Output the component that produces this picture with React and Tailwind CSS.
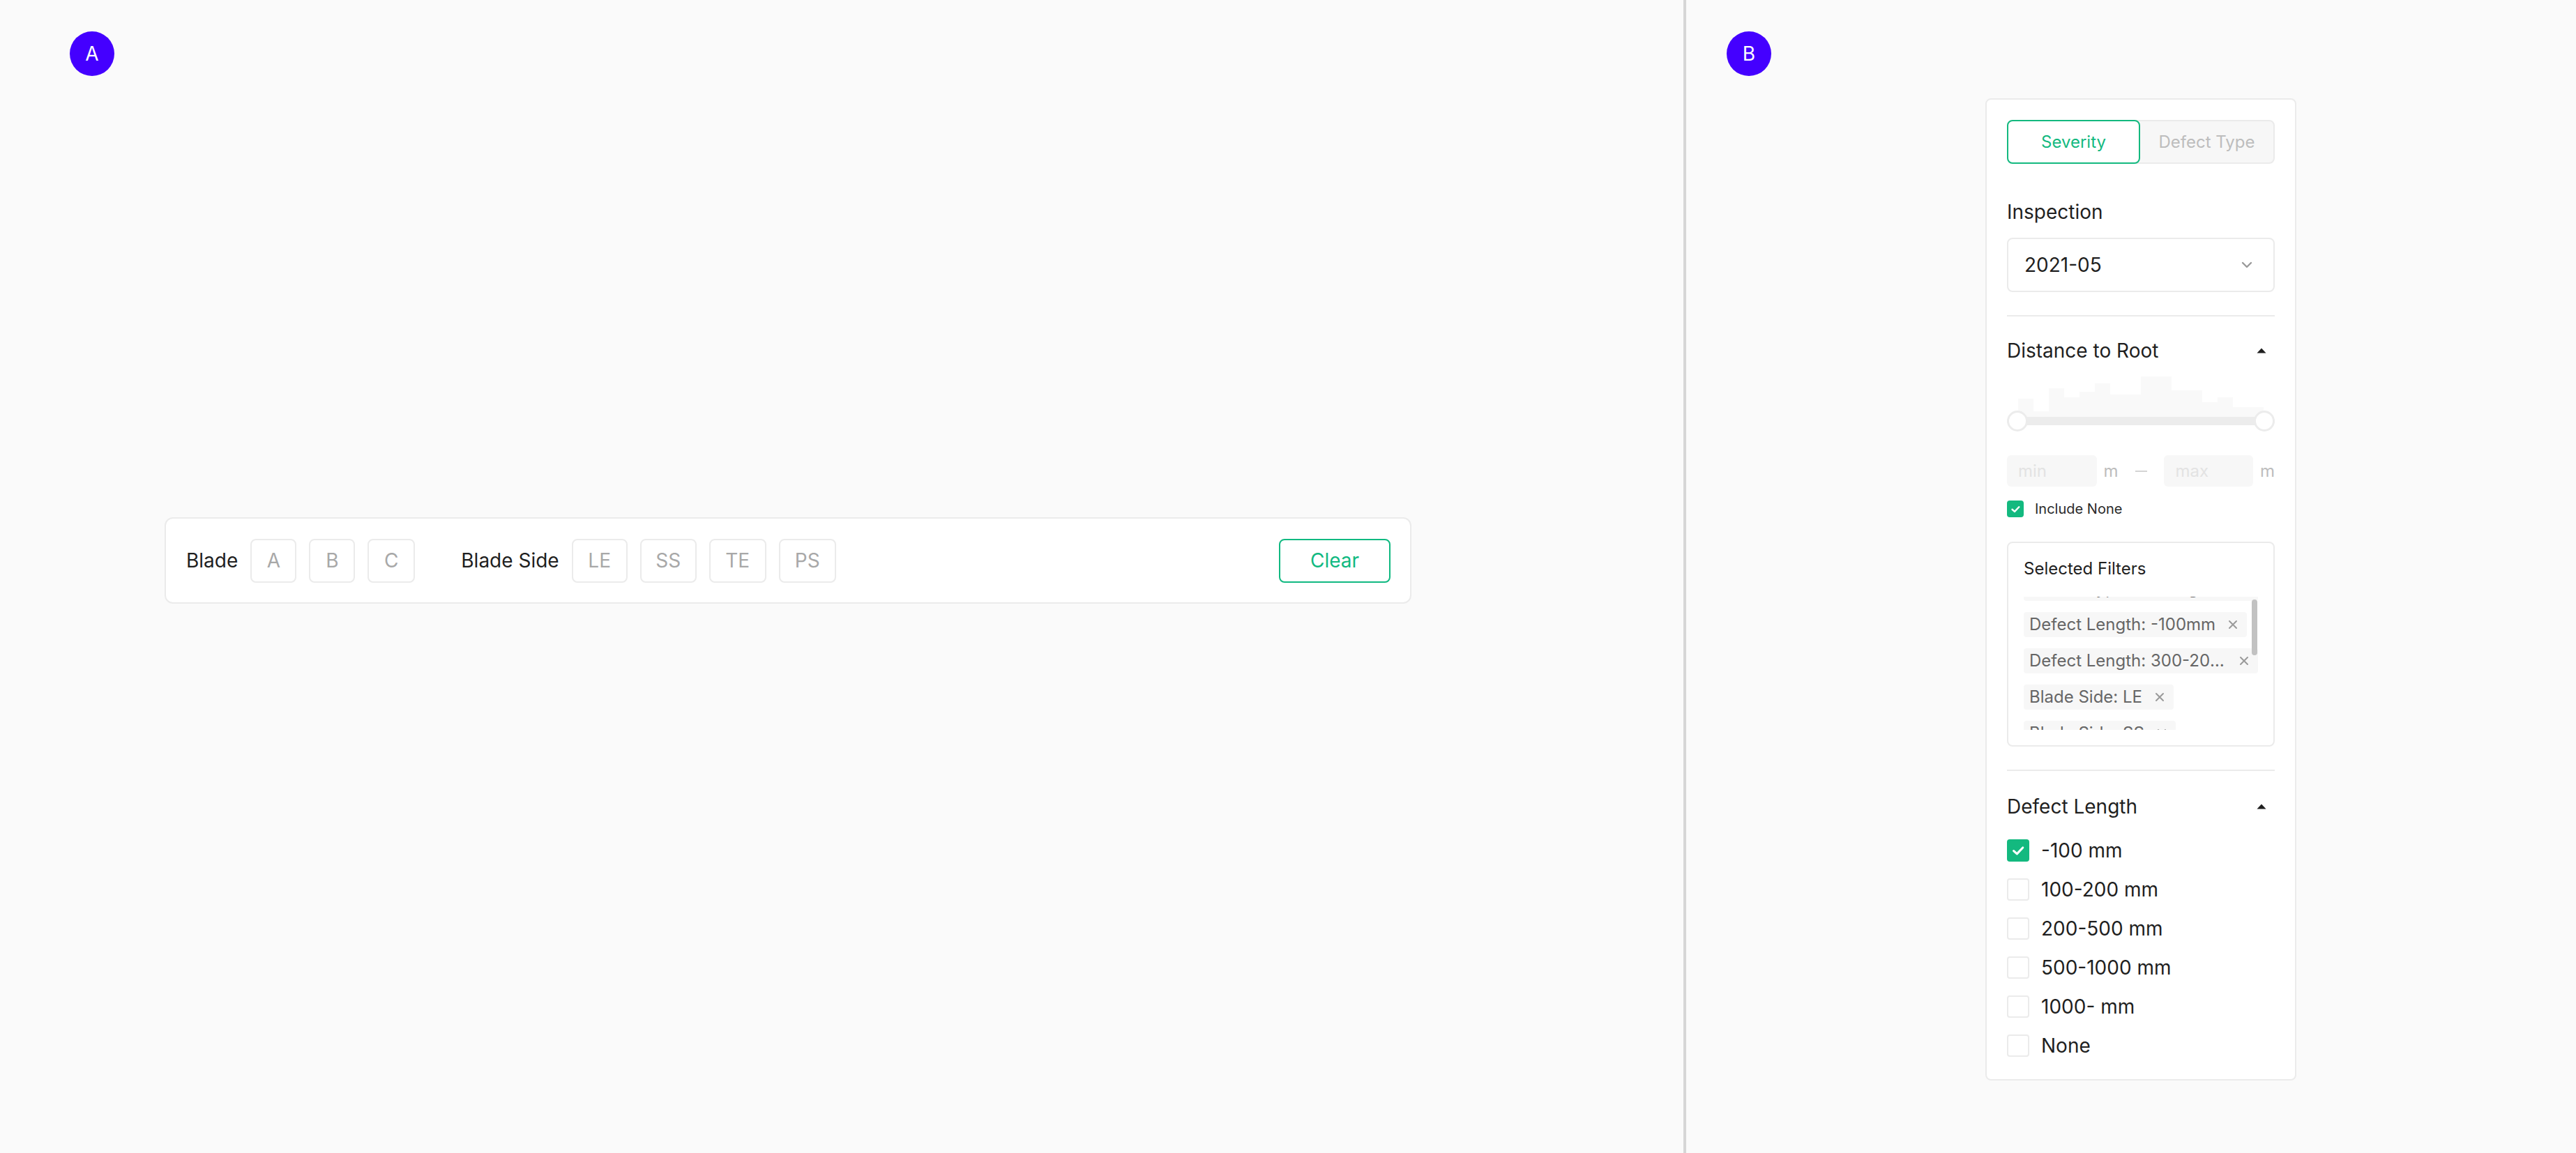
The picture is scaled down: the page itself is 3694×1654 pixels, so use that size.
import React from "react";

const FONT = { fontFamily: "Inter, 'Noto Sans', sans-serif" };

function Badge({ letter }) {
  return (
    <div className="w-[64px] h-[64px] rounded-full bg-[#4400ff] text-white text-[28px] flex items-center justify-center shrink-0">
      {letter}
    </div>
  );
}

function Chip({ label, w }) {
  return (
    <div
      className={`${w} h-[63px] border-2 border-[#ebebeb] rounded-[8px] flex items-center justify-center text-[28px] text-[#a8a8a8]`}
    >
      {label}
    </div>
  );
}

function Caret() {
  return (
    <svg width="14" height="8" viewBox="0 0 14 8" className="mr-[12px]">
      <path d="M7 0.5 L13.5 7.5 L0.5 7.5 Z" fill="#1f1f1f" />
    </svg>
  );
}

function XIcon() {
  return (
    <svg width="14" height="14" viewBox="0 0 14 14" className="ml-[18px] shrink-0">
      <path d="M2 2 L12 12 M12 2 L2 12" stroke="#9a9a9a" strokeWidth="2" strokeLinecap="round" />
    </svg>
  );
}

function Tag({ text }) {
  return (
    <div className="flex items-center h-[36px] w-fit max-w-full bg-[#f7f7f7] rounded-[4px] pl-[8px] pr-[13px] text-[24px] text-[#666666] shrink-0">
      <span className="truncate">{text}</span>
      <XIcon />
    </div>
  );
}

function Check({ checked, size }) {
  if (checked) {
    return (
      <div className={`${size} rounded-[4px] bg-[#13b97f] flex items-center justify-center shrink-0`}>
        <svg viewBox="0 0 24 24" className="w-[70%] h-[70%]">
          <path d="M5 12.5 L10 17 L19 7.5" fill="none" stroke="white" strokeWidth="3.4" strokeLinecap="round" strokeLinejoin="round" />
        </svg>
      </div>
    );
  }
  return <div className={`${size} rounded-[4px] border-2 border-[#ebebeb] bg-white shrink-0`} />;
}

const bars = [26, 8, 41, 28, 36, 48, 32, 32, 58, 58, 38, 38, 21, 28, 14, 14];

export default function App() {
  return (
    <div className="w-[3694px] h-[1654px] flex bg-[#fafafa] text-[#1f1f1f]" style={FONT}>
      {/* Panel A */}
      <div className="w-[2414px] h-full shrink-0 flex flex-col pl-[100px] pt-[45px]">
        <Badge letter="A" />
        <div className="ml-[136px] mt-[633px] w-[1788px] h-[124px] bg-white border-2 border-[#ebebeb] rounded-[12px] flex items-center pl-[29px] pr-[28px]">
          <span className="text-[28px] text-[#1f1f1f] mr-[18px]">Blade</span>
          <div className="flex gap-[18px]">
            <Chip label="A" w="w-[66px]" />
            <Chip label="B" w="w-[66px]" />
            <Chip label="C" w="w-[68px]" />
          </div>
          <span className="text-[28px] text-[#1f1f1f] ml-[66px] mr-[18px]">Blade Side</span>
          <div className="flex gap-[18px]">
            <Chip label="LE" w="w-[80px]" />
            <Chip label="SS" w="w-[81px]" />
            <Chip label="TE" w="w-[82px]" />
            <Chip label="PS" w="w-[82px]" />
          </div>
          <div className="ml-auto w-[160px] h-[63px] border-2 border-[#10b981] rounded-[8px] flex items-center justify-center text-[28px] text-[#10b981]">
            Clear
          </div>
        </div>
      </div>

      {/* Divider */}
      <div className="w-[4px] h-full bg-[#d6d6d6] shrink-0" />

      {/* Panel B */}
      <div className="flex-1 h-full flex items-start">
        <div className="ml-[58px] mt-[45px]">
          <Badge letter="B" />
        </div>
        <div className="ml-[307px] mt-[141px] w-[446px] bg-white border-2 border-[#ebebeb] rounded-[8px] px-[29px] pt-[29px] pb-[32px] flex flex-col">
          {/* Tabs */}
          <div className="h-[63px] flex bg-[#f7f7f7] border-2 border-[#ebebeb] rounded-[8px] relative">
            <div className="absolute -left-[2px] -top-[2px] w-[191px] h-[63px] bg-white border-2 border-[#13b97f] rounded-[8px] flex items-center justify-center text-[24px] text-[#13b97f]">
              Severity
            </div>
            <div className="ml-[189px] flex-1 flex items-center justify-center text-[24px] text-[#bdbdbd]">
              Defect Type
            </div>
          </div>

          {/* Inspection */}
          <div className="mt-[49px] h-[40px] leading-[40px] text-[28px]">Inspection</div>
          <div className="mt-[17px] h-[78px] border-2 border-[#ebebeb] rounded-[8px] flex items-center pl-[23px] pr-[30px]">
            <span className="text-[28px] text-[#1f1f1f]">2021-05</span>
            <svg width="16" height="10" viewBox="0 0 16 10" className="ml-auto">
              <path d="M2 2 L8 8 L14 2" fill="none" stroke="#9a9a9a" strokeWidth="2.4" strokeLinecap="round" strokeLinejoin="round" />
            </svg>
          </div>

          <div className="mt-[33px] h-[2px] bg-[#ebebeb]" />

          {/* Distance to Root */}
          <div className="mt-[29px] h-[40px] flex items-center justify-between">
            <span className="text-[28px] leading-[40px]">Distance to Root</span>
            <Caret />
          </div>
          <div className="mt-[17px] flex flex-col">
            <div className="h-[58px] flex items-end px-[16px]">
              {bars.map((h, i) => (
                <div key={i} className="flex-1 bg-[#f9f9f9]" style={{ height: `${h}px` }} />
              ))}
            </div>
            <div className="h-[12px] bg-[#ececec] rounded-full relative">
              <div className="absolute left-0 -top-[9px] w-[30px] h-[30px] rounded-full bg-white border-[3px] border-[#ececec]" />
              <div className="absolute right-0 -top-[9px] w-[30px] h-[30px] rounded-full bg-white border-[3px] border-[#ececec]" />
            </div>
          </div>

          {/* min / max */}
          <div className="mt-[43px] h-[45px] flex items-center">
            <div className="w-[129px] h-[45px] bg-[#f7f7f7] rounded-[6px] flex items-center pl-[16px] text-[24px] text-[#e3e3e3]">
              min
            </div>
            <span className="ml-[10px] text-[24px] text-[#bdbdbd]">m</span>
            <div className="ml-[24px] w-[18px] h-[2px] bg-[#d4d4d4]" />
            <div className="ml-[24px] w-[128px] h-[45px] bg-[#f7f7f7] rounded-[6px] flex items-center pl-[16px] text-[24px] text-[#e3e3e3]">
              max
            </div>
            <span className="ml-[10px] text-[24px] text-[#bdbdbd]">m</span>
          </div>

          {/* Include None */}
          <div className="mt-[20px] h-[24px] flex items-center">
            <Check checked size="w-[24px] h-[24px]" />
            <span className="ml-[16px] text-[20px] text-[#2a2a2a]">Include None</span>
          </div>

          {/* Selected Filters */}
          <div className="mt-[35px] h-[294px] border-2 border-[#ebebeb] rounded-[8px] pl-[22px] pr-[22px] pt-[21px] flex flex-col">
            <div className="h-[32px] leading-[32px] text-[24px]">Selected Filters</div>
            <div className="mt-[24px] h-[191px] overflow-hidden relative">
              <div className="-mt-[30px] flex flex-col gap-[16px]">
                <Tag text="Defect Type: Leading Edge Erosion" />
                <Tag text="Defect Length: -100mm" />
                <Tag text="Defect Length: 300-2000mm" />
                <Tag text="Blade Side: LE" />
                <Tag text="Blade Side: SS" />
              </div>
              <div className="absolute right-[1px] top-[4px] w-[8px] h-[80px] rounded-full bg-[#c2c2c2]" />
            </div>
          </div>

          <div className="mt-[33px] h-[2px] bg-[#ebebeb]" />

          {/* Defect Length */}
          <div className="mt-[31px] h-[40px] flex items-center justify-between">
            <span className="text-[28px] leading-[40px]">Defect Length</span>
            <Caret />
          </div>
          <div className="mt-[27px] flex flex-col gap-[24px]">
            {[
              ["-100 mm", true],
              ["100-200 mm", false],
              ["200-500 mm", false],
              ["500-1000 mm", false],
              ["1000- mm", false],
              ["None", false],
            ].map(([label, c]) => (
              <div key={label} className="h-[32px] flex items-center">
                <Check checked={c} size="w-[32px] h-[32px]" />
                <span className="ml-[17px] text-[28px] text-[#1f1f1f]">{label}</span>
              </div>
            ))}
          </div>
        </div>
      </div>
    </div>
  );
}
